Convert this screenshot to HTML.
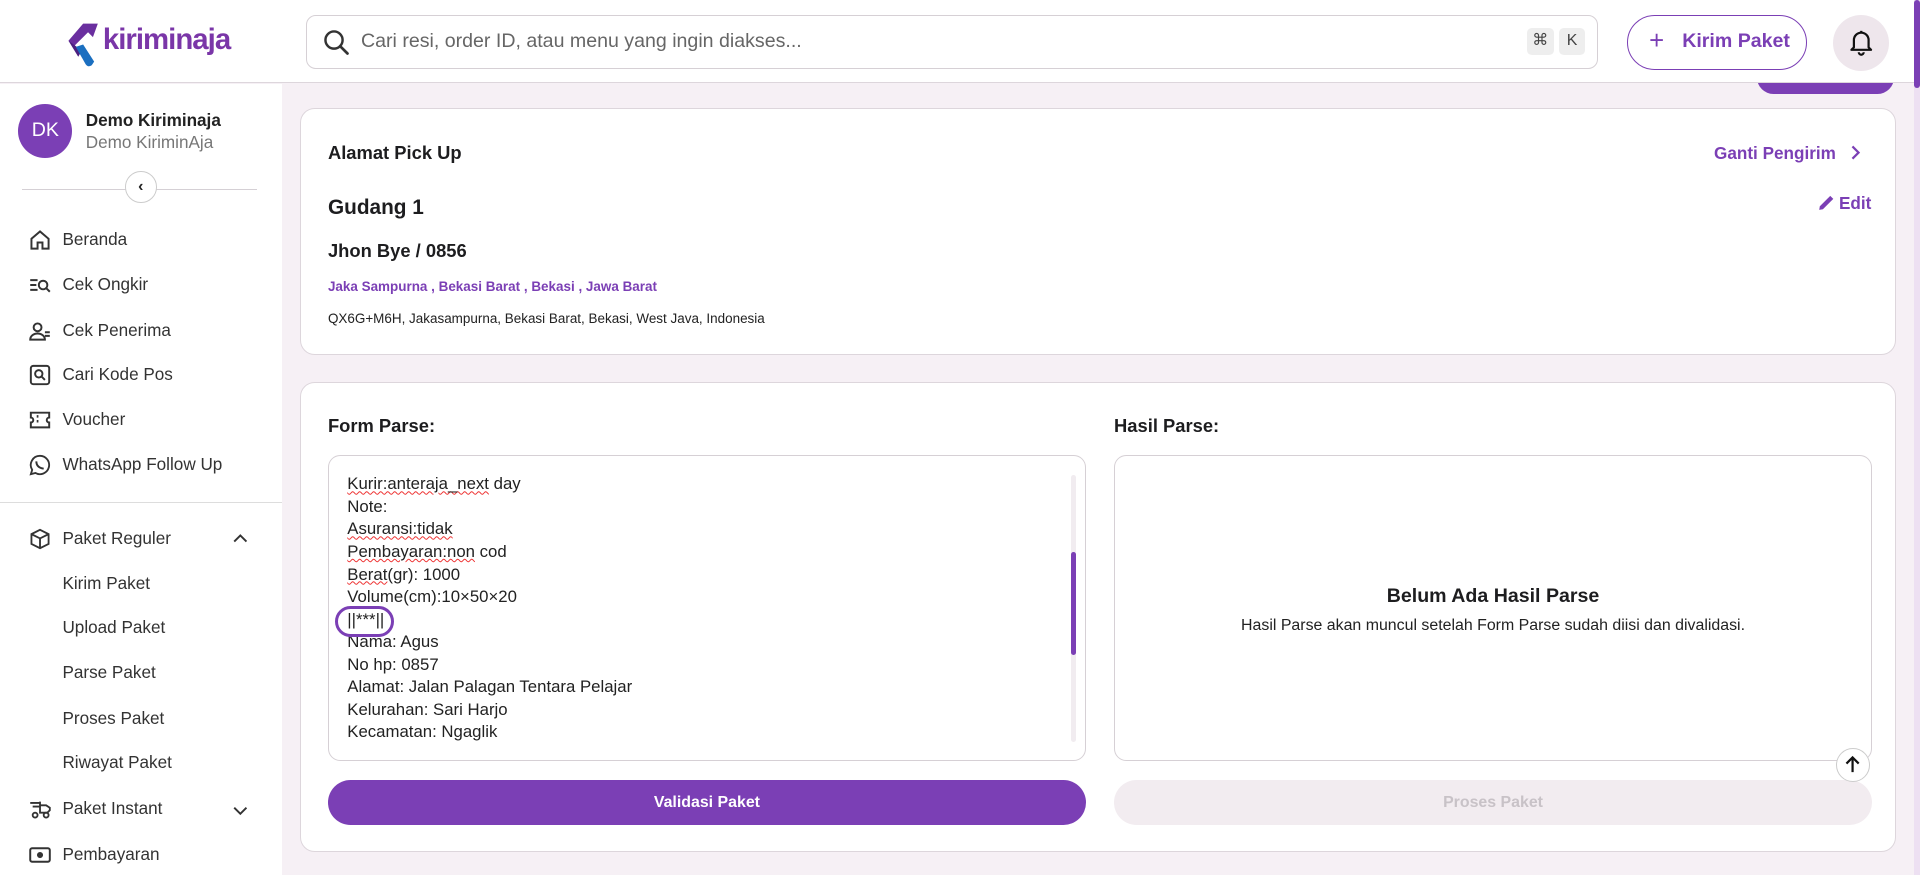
<!DOCTYPE html>
<html><head><meta charset="utf-8">
<style>
*{box-sizing:border-box;margin:0;padding:0}
html,body{width:1920px;height:875px;overflow:hidden}
body{font-family:"Liberation Sans",sans-serif;background:#f6f0f5;color:#1d1d1f}
#w{zoom:1.22449;width:1568px;height:715px;position:relative;overflow:hidden}
.a{position:absolute}
.hdr{left:0;top:0;width:1563px;height:68px;background:#fff;border-bottom:1px solid #ddd6dc}
.side{left:0;top:69px;width:230px;height:650px;background:#fff}
.mi{position:absolute;left:51px;font-size:14px;color:#333}
.ic{position:absolute;left:24px;width:18px;height:18px}
.card{background:#fff;border:1px solid #ddd6dc;border-radius:12px}
.ta{font-size:13.7px;color:#222;line-height:18.4px}
</style></head><body><div id="w">

<div class="a" style="left:1563px;top:0;width:5px;height:715px;background:#ede0f2"></div>
<div class="a" style="left:1563px;top:0;width:5px;height:72px;background:#7b3fb5;border-radius:3px"></div>

<div class="a" style="left:1435px;top:50px;width:112px;height:27px;background:#7b3fb5;border-radius:14px"></div>

<div class="a hdr">
 <svg class="a" style="left:54px;top:16px" width="30" height="40" viewBox="0 0 30 40"><path d="M14 3 L26 3 L22 14 L18 10 L6 22 L2 17 Z" fill="#6a2f9f"/><path d="M2 17 L10 30 L13 25 Z" fill="#4b2080"/><path d="M8 22 L16 36 Q18 39 21 37 L23 34 L14 20 Z" fill="#1b6fc0"/></svg>
 <div class="a" style="left:84px;top:19px;font-size:24px;font-weight:bold;color:#7a36a8;letter-spacing:-0.8px">kiriminaja</div>
 <div class="a" style="left:250px;top:12px;width:1055px;height:44px;border:1px solid #d6d0d5;border-radius:8px">
  <svg class="a" style="left:13px;top:11px" width="22" height="22" viewBox="0 0 22 22"><circle cx="9" cy="9" r="7" fill="none" stroke="#333" stroke-width="2"/><path d="M14 14 L20 20" stroke="#333" stroke-width="2.2" stroke-linecap="round"/></svg>
  <div class="a" style="left:44px;top:12px;font-size:16px;color:#666">Cari resi, order ID, atau menu yang ingin diakses...</div>
  <div class="a" style="left:996px;top:10px;width:22px;height:22px;background:#eee;border-radius:4px;font-size:13px;text-align:center;line-height:22px;color:#444">⌘</div>
  <div class="a" style="left:1022px;top:10px;width:22px;height:22px;background:#eee;border-radius:4px;font-size:13px;text-align:center;line-height:22px;color:#444">K</div>
 </div>
 <div class="a" style="left:1329px;top:12px;width:147px;height:45px;border:1.5px solid #7b3fb5;border-radius:23px;color:#7b3fb5;font-weight:bold;font-size:16px">
  <span class="a" style="left:17px;top:9px;font-size:21px;font-weight:normal">+</span><span class="a" style="left:44px;top:12px">Kirim Paket</span></div>
 <div class="a" style="left:1497px;top:12px;width:46px;height:46px;border-radius:50%;background:#eee6ec">
  <svg class="a" style="left:13px;top:12px" width="20" height="22" viewBox="0 0 20 22"><path d="M4 15 V9 a6 6 0 0 1 12 0 V15 L18 17 H2 Z" fill="none" stroke="#111" stroke-width="1.8" stroke-linejoin="round"/><path d="M8 19 a2 2 0 0 0 4 0" fill="none" stroke="#111" stroke-width="1.8"/><path d="M10 1.5 V3" stroke="#111" stroke-width="1.8"/></svg></div>
</div>

<div class="a side">
 <div class="a" style="left:15px;top:16px;width:44px;height:44px;border-radius:50%;background:#7b3fb5;color:#fff;font-size:16px;text-align:center;line-height:44px">DK</div>
 <div class="a" style="left:70px;top:21px;font-size:14px;font-weight:bold;color:#222">Demo Kiriminaja</div>
 <div class="a" style="left:70px;top:39px;font-size:14px;color:#777">Demo KiriminAja</div>
 <div class="a" style="left:18px;top:85px;width:192px;height:1px;background:#d5d0d5"></div>
 <div class="a" style="left:102px;top:71px;width:26px;height:26px;border:1px solid #ccc;border-radius:50%;background:#fff;text-align:center;font-size:13px;line-height:24px;font-weight:bold;color:#222">‹</div>

 <svg class="ic" style="top:118px" viewBox="0 0 18 18"><path d="M2 8 L9 2 L16 8 V16 H11 V11 H7 V16 H2 Z" fill="none" stroke="#333" stroke-width="1.6"/></svg>
 <div class="mi" style="top:118px">Beranda</div>
 <svg class="ic" style="top:155px" viewBox="0 0 18 18"><path d="M1 5 H7 M1 9 H6 M1 13 H7" stroke="#333" stroke-width="1.6"/><circle cx="11.5" cy="9" r="3.5" fill="none" stroke="#333" stroke-width="1.6"/><path d="M14 11.5 L17 14.5" stroke="#333" stroke-width="1.6"/></svg>
 <div class="mi" style="top:155px">Cek Ongkir</div>
 <svg class="ic" style="top:192px" viewBox="0 0 18 18"><circle cx="7" cy="6" r="3.2" fill="none" stroke="#333" stroke-width="1.6"/><path d="M1 16 a6 5 0 0 1 12 0 Z" fill="none" stroke="#333" stroke-width="1.6"/><path d="M13 10 H17 M13 13 H17" stroke="#333" stroke-width="1.6"/></svg>
 <div class="mi" style="top:192px">Cek Penerima</div>
 <svg class="ic" style="top:228px" viewBox="0 0 18 18"><rect x="1.5" y="1.5" width="15" height="15" rx="2" fill="none" stroke="#333" stroke-width="1.6"/><circle cx="8" cy="8" r="3" fill="none" stroke="#333" stroke-width="1.6"/><path d="M10 10 L13 13" stroke="#333" stroke-width="1.6"/></svg>
 <div class="mi" style="top:228px">Cari Kode Pos</div>
 <svg class="ic" style="top:265px" viewBox="0 0 18 18"><path d="M1.5 3 H16.5 V7 a2 2 0 0 0 0 4 V15 H1.5 V11 a2 2 0 0 0 0 -4 Z" fill="none" stroke="#333" stroke-width="1.6"/><path d="M7 5 V13" stroke="#333" stroke-width="1.4" stroke-dasharray="2 2"/></svg>
 <div class="mi" style="top:265px">Voucher</div>
 <svg class="ic" style="top:302px" viewBox="0 0 18 18"><path d="M9 1.5 a7.5 7.5 0 1 1 -3.8 14 L1.5 16.5 L2.6 13 A7.5 7.5 0 0 1 9 1.5 Z" fill="none" stroke="#333" stroke-width="1.5"/><path d="M6 6 q0 5 6 6" fill="none" stroke="#333" stroke-width="1.6"/></svg>
 <div class="mi" style="top:302px">WhatsApp Follow Up</div>
 <div class="a" style="left:0;top:341px;width:230px;height:1px;background:#ddd"></div>

 <svg class="ic" style="top:362px" viewBox="0 0 18 18"><path d="M9 1.5 L16 5 V13 L9 16.5 L2 13 V5 Z M2 5 L9 8.5 L16 5 M9 8.5 V16.5" fill="none" stroke="#333" stroke-width="1.5"/></svg>
 <div class="mi" style="top:362px">Paket Reguler</div>
 <svg class="a" style="left:190px;top:366px" width="12" height="10" viewBox="0 0 12 10"><path d="M1 7 L6 2 L11 7" fill="none" stroke="#333" stroke-width="1.6"/></svg>
 <div class="mi" style="top:399px">Kirim Paket</div>
 <div class="mi" style="top:435px">Upload Paket</div>
 <div class="mi" style="top:472px">Parse Paket</div>
 <div class="mi" style="top:509px">Proses Paket</div>
 <div class="mi" style="top:545px">Riwayat Paket</div>
 <svg class="ic" style="top:583px" viewBox="0 0 18 18"><path d="M1 4 H9 M3 7 H9 M9 3 V12 H15 L17 10 V8 L14 6 H9" fill="none" stroke="#333" stroke-width="1.5"/><circle cx="5" cy="14" r="2" fill="none" stroke="#333" stroke-width="1.5"/><circle cx="14" cy="14" r="2" fill="none" stroke="#333" stroke-width="1.5"/></svg>
 <div class="mi" style="top:583px">Paket Instant</div>
 <svg class="a" style="left:190px;top:588px" width="12" height="10" viewBox="0 0 12 10"><path d="M1 3 L6 8 L11 3" fill="none" stroke="#333" stroke-width="1.6"/></svg>
 <svg class="ic" style="top:620px" viewBox="0 0 18 18"><rect x="1" y="3.5" width="16" height="11" rx="1.5" fill="none" stroke="#333" stroke-width="1.6"/><circle cx="9" cy="9" r="2.5" fill="#333"/></svg>
 <div class="mi" style="top:620px">Pembayaran</div>
</div>

<div class="a card" style="left:245px;top:88px;width:1303px;height:202px">
 <div class="a" style="left:22px;top:27px;font-size:15px;font-weight:bold">Alamat Pick Up</div>
 <div class="a" style="left:1154px;top:28px;font-size:14px;font-weight:bold;color:#7b3fb5">Ganti Pengirim</div>
 <svg class="a" style="left:1265px;top:29px" width="10" height="14" viewBox="0 0 10 14"><path d="M2 2 L7 7 L2 12" fill="none" stroke="#7b3fb5" stroke-width="1.8"/></svg>
 <div class="a" style="left:22px;top:71px;font-size:17px;font-weight:bold">Gudang 1</div>
 <svg class="a" style="left:1239px;top:70px" width="14" height="14" viewBox="0 0 14 14"><path d="M1 13 L1.5 10 L10 1.5 L12.5 4 L4 12.5 Z" fill="#7b3fb5"/></svg>
 <div class="a" style="left:1256px;top:69px;font-size:14px;font-weight:bold;color:#7b3fb5">Edit</div>
 <div class="a" style="left:22px;top:107px;font-size:15px;font-weight:bold">Jhon Bye / 0856</div>
 <div class="a" style="left:22px;top:139px;font-size:11px;font-weight:bold;color:#7b3fb5">Jaka Sampurna , Bekasi Barat , Bekasi , Jawa Barat</div>
 <div class="a" style="left:22px;top:165px;font-size:11px;color:#222">QX6G+M6H, Jakasampurna, Bekasi Barat, Bekasi, West Java, Indonesia</div>
</div>

<div class="a card" style="left:245px;top:312px;width:1303px;height:384px">
 <div class="a" style="left:22px;top:26px;font-size:15px;font-weight:bold">Form Parse:</div>
 <div class="a" style="left:664px;top:26px;font-size:15px;font-weight:bold">Hasil Parse:</div>
 <div class="a" style="left:22px;top:59px;width:619px;height:250px;border:1px solid #d6d0d5;border-radius:10px;overflow:hidden">
  <div class="a ta" style="left:15px;top:14px;width:560px">
   <div><span style="text-decoration:underline wavy #e33;text-decoration-thickness:1px">Kurir:anteraja_next</span> day</div>
   <div>Note:</div>
   <div><span style="text-decoration:underline wavy #e33;text-decoration-thickness:1px">Asuransi:tidak</span></div>
   <div><span style="text-decoration:underline wavy #e33;text-decoration-thickness:1px">Pembayaran:non</span> cod</div>
   <div><span style="text-decoration:underline wavy #e33;text-decoration-thickness:1px">Berat</span>(gr): 1000</div>
   <div>Volume(cm):10×50×20</div>
   <div>||***||</div>
   <div>Nama: Agus</div>
   <div>No hp: 0857</div>
   <div>Alamat: Jalan Palagan Tentara Pelajar</div>
   <div>Kelurahan: Sari Harjo</div>
   <div>Kecamatan: Ngaglik</div>
  </div>
  <div class="a" style="left:5px;top:122px;width:48px;height:26px;border:3px solid #7b3fb5;border-radius:13px"></div>
  <div class="a" style="left:606px;top:15px;width:4px;height:218px;background:#f1ecf0;border-radius:2px"></div>
  <div class="a" style="left:606px;top:78px;width:4px;height:84px;background:#7b3fb5;border-radius:2px"></div>
 </div>
 <div class="a" style="left:664px;top:59px;width:619px;height:250px;border:1px solid #d6d0d5;border-radius:10px">
  <div class="a" style="left:0;top:105px;width:100%;text-align:center;font-size:16px;font-weight:bold">Belum Ada Hasil Parse</div>
  <div class="a" style="left:0;top:131px;width:100%;text-align:center;font-size:13px;color:#222">Hasil Parse akan muncul setelah Form Parse sudah diisi dan divalidasi.</div>
 </div>
 <div class="a" style="left:22px;top:324px;width:619px;height:37px;background:#7b3fb5;border-radius:19px;color:#fff;font-size:13px;font-weight:bold;text-align:center;line-height:37px">Validasi Paket</div>
 <div class="a" style="left:664px;top:324px;width:619px;height:37px;background:#f2ecf0;border-radius:19px;color:#c8c2c7;font-size:13px;font-weight:bold;text-align:center;line-height:37px">Proses Paket</div>
</div>

<div class="a" style="left:1499px;top:611px;width:28px;height:28px;border-radius:50%;background:#fff;border:1px solid #ccc">
 <svg class="a" style="left:6px;top:5px" width="14" height="16" viewBox="0 0 14 16"><path d="M7 14 V2 M2 7 L7 2 L12 7" fill="none" stroke="#111" stroke-width="1.8"/></svg></div>
</div></body></html>
